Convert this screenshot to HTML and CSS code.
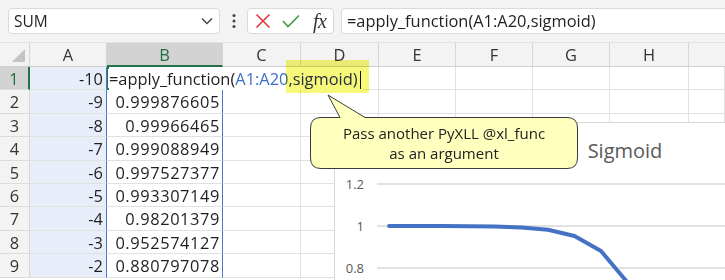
FILE: index.html
```html
<!DOCTYPE html>
<html lang="en">
<head>
    <meta charset="UTF-8">
    <title>Sigmoid - apply_function</title>
    <link rel="stylesheet" href="styles.css">
</head>
<body>

<div class="toolbar">
    <div class="name-box">
        <span>SUM</span>
        <svg class="chevron" width="12" height="8" viewBox="0 0 12 8"><polyline points="1,1.5 6,6.5 11,1.5" fill="none" stroke="#444" stroke-width="1.4"/></svg>
    </div>
    <svg class="dots" width="4" height="16" viewBox="0 0 4 16">
        <circle cx="2" cy="2.5" r="1.5" fill="#444"/>
        <circle cx="2" cy="8" r="1.5" fill="#444"/>
        <circle cx="2" cy="13.5" r="1.5" fill="#444"/>
    </svg>
    <div class="fx-buttons">
        <svg width="16" height="16" viewBox="0 0 16 16"><path d="M1.5 1.5 L14.5 14.5 M14.5 1.5 L1.5 14.5" stroke="#e0383e" stroke-width="1.6" fill="none"/></svg>
        <svg width="18" height="14" viewBox="0 0 18 14"><polyline points="1,7 6,12.5 17,1.5" stroke="#3d9c4a" stroke-width="1.7" fill="none"/></svg>
        <span class="fx">fx</span>
    </div>
    <div class="formula-input">=apply_function(A1:A20,sigmoid)</div>
</div>

<div class="sheet">
    <div class="hcell corner"><span class="corner-mark"></span></div>
    <div class="hcell">A</div>
    <div class="hcell active">B</div>
    <div class="hcell">C</div>
    <div class="hcell">D</div>
    <div class="hcell">E</div>
    <div class="hcell">F</div>
    <div class="hcell">G</div>
    <div class="hcell">H</div>
    <div class="hcell last"></div>

    <div class="rnum active">1</div>
    <div class="cell ref">-10</div>
    <div class="cell editing">
        <span class="entry">=apply_function(<span class="arg-ref">A1:A20</span><span class="arg-fn">,sigmoid)</span><span class="caret"></span></span>
    </div>
    <div class="cell"></div><div class="cell"></div><div class="cell"></div><div class="cell"></div><div class="cell"></div><div class="cell"></div><div class="cell"></div>

    <div class="rnum">2</div>
    <div class="cell ref">-9</div><div class="cell out">0.999876605</div>
    <div class="cell"></div><div class="cell"></div><div class="cell"></div><div class="cell"></div><div class="cell"></div><div class="cell"></div><div class="cell"></div>

    <div class="rnum">3</div>
    <div class="cell ref">-8</div><div class="cell out">0.99966465</div>
    <div class="cell"></div><div class="cell"></div><div class="cell"></div><div class="cell"></div><div class="cell"></div><div class="cell"></div><div class="cell"></div>

    <div class="rnum">4</div>
    <div class="cell ref">-7</div><div class="cell out">0.999088949</div>
    <div class="cell"></div><div class="cell"></div><div class="cell"></div><div class="cell"></div><div class="cell"></div><div class="cell"></div><div class="cell"></div>

    <div class="rnum">5</div>
    <div class="cell ref">-6</div><div class="cell out">0.997527377</div>
    <div class="cell"></div><div class="cell"></div><div class="cell"></div><div class="cell"></div><div class="cell"></div><div class="cell"></div><div class="cell"></div>

    <div class="rnum">6</div>
    <div class="cell ref">-5</div><div class="cell out">0.993307149</div>
    <div class="cell"></div><div class="cell"></div><div class="cell"></div><div class="cell"></div><div class="cell"></div><div class="cell"></div><div class="cell"></div>

    <div class="rnum">7</div>
    <div class="cell ref">-4</div><div class="cell out">0.98201379</div>
    <div class="cell"></div><div class="cell"></div><div class="cell"></div><div class="cell"></div><div class="cell"></div><div class="cell"></div><div class="cell"></div>

    <div class="rnum">8</div>
    <div class="cell ref">-3</div><div class="cell out">0.952574127</div>
    <div class="cell"></div><div class="cell"></div><div class="cell"></div><div class="cell"></div><div class="cell"></div><div class="cell"></div><div class="cell"></div>

    <div class="rnum">9</div>
    <div class="cell ref">-2</div><div class="cell out">0.880797078</div>
    <div class="cell"></div><div class="cell"></div><div class="cell"></div><div class="cell"></div><div class="cell"></div><div class="cell"></div><div class="cell"></div>
</div>

<!-- marker over the function argument -->
<div class="highlight"></div>

<!-- chart object floating over the grid -->
<div class="chart">
    <div class="chart-title">Sigmoid</div>
    <svg class="chart-plot" width="400" height="170" viewBox="0 0 400 170">
        <line x1="42" y1="61" x2="400" y2="61" stroke="#d9d9d9" stroke-width="1.3"/>
        <line x1="42" y1="103" x2="400" y2="103" stroke="#d9d9d9" stroke-width="1.3"/>
        <line x1="42" y1="145" x2="400" y2="145" stroke="#d9d9d9" stroke-width="1.3"/>
        <text x="29" y="66" text-anchor="end">1.2</text>
        <text x="29" y="108" text-anchor="end">1</text>
        <text x="29" y="150" text-anchor="end">0.8</text>
        <polyline fill="none" stroke="#4472c4" stroke-width="4" stroke-linecap="round" stroke-linejoin="round"
            points="54,103 80.5,103 107,103.1 133.5,103.2 160,103.5 186.5,104.4 213,106.8 239.5,113 266,128 292.5,159.5 319,208"/>
    </svg>
</div>

<div class="callout">
    <svg class="callout-shape" width="274" height="80" viewBox="0 0 274 80">
        <path d="M13 25.5 L32 25.5 L20 3 L57 25.5 L259 25.5 Q269.5 25.5 269.5 36 L269.5 66 Q269.5 76.5 259 76.5 L13 76.5 Q2.5 76.5 2.5 66 L2.5 36 Q2.5 25.5 13 25.5 Z"
            fill="#ffffbe" stroke="#3a3a3a" stroke-width="1"/>
    </svg>
    <div class="callout-text">
        <div>Pass another PyXLL @xl_func</div>
        <div>as an argument</div>
    </div>
</div>

</body>
</html>
```

FILE: styles.css
```css
body {
    margin: 0;
    width: 725px;
    height: 280px;
    overflow: hidden;
    background-color: #fff;
    font-family: "Open Sans", "Liberation Sans", sans-serif;
    color: #1f1f1f;
    position: relative;
}

.toolbar {
    display: flex;
    align-items: center;
    height: 43px;
    padding: 0 0 0 8px;
    background-color: #f3f3f3;
    border-bottom: 1px solid #e3e3e3;
    box-sizing: border-box;
}

.name-box {
    display: flex;
    align-items: center;
    justify-content: space-between;
    width: 212px;
    height: 26px;
    padding: 0 6px 0 5px;
    box-sizing: border-box;
    background-color: #fff;
    border: 1px solid #dadada;
    border-radius: 4px;
    font-size: 15.5px;
}

.dots {
    margin: 0 11px 0 12px;
}

.fx-buttons {
    display: flex;
    align-items: center;
    gap: 11px;
    width: 87px;
    height: 26px;
    padding-left: 7px;
    box-sizing: border-box;
    background-color: #fff;
    border: 1px solid #dadada;
    border-radius: 4px;
}

.fx {
    font-family: "Liberation Serif", serif;
    font-style: italic;
    font-size: 20px;
    color: #333;
    letter-spacing: -0.5px;
    margin-left: 2px;
}

.formula-input {
    flex: 1;
    height: 26px;
    margin-left: 7px;
    margin-right: -10px;
    padding-left: 5px;
    box-sizing: border-box;
    background-color: #fff;
    border: 1px solid #dadada;
    border-radius: 4px;
    font-size: 16.4px;
    line-height: 24px;
    white-space: nowrap;
}

.sheet {
    display: grid;
    grid-template-columns: 30px 77px 116px 78px 78px 77px 77px 77px 79px 1fr;
    grid-template-rows: 24px repeat(9, 23.4px);
    font-size: 16.4px;
}

.hcell {
    background-color: #f3f3f3;
    border-right: 1px solid #d6d6d6;
    border-bottom: 1px solid #cfcfcf;
    text-align: center;
    line-height: 23px;
    color: #333;
    box-sizing: border-box;
}

.hcell.active {
    background-color: #d3d3d3;
    color: #1e6e3c;
    border-bottom: 2px solid #217346;
}

.hcell.last {
    border-right: none;
}

.corner {
    position: relative;
}

.corner-mark {
    position: absolute;
    right: 4px;
    bottom: 4px;
    width: 0;
    height: 0;
    border-left: 13px solid transparent;
    border-bottom: 13px solid #c4c4c4;
}

.rnum {
    background-color: #f3f3f3;
    border-right: 1px solid #d6d6d6;
    border-bottom: 1px solid #dcdcdc;
    text-align: center;
    line-height: 23px;
    color: #333;
    box-sizing: border-box;
}

.rnum.active {
    background-color: #d3d3d3;
    color: #1e6e3c;
    border-right: 2px solid #217346;
}

.cell {
    border-right: 1px solid #e1e1e1;
    border-bottom: 1px solid #e1e1e1;
    line-height: 23px;
    padding: 0 3px;
    box-sizing: border-box;
    white-space: nowrap;
}

.cell.ref {
    background-color: #e8eef9;
    text-align: right;
    border-right: 1px solid #4a78c8;
}

.cell.out {
    text-align: right;
    letter-spacing: 0.6px;
    padding-right: 2px;
    border-right: 1px solid #4a78c8;
}

.cell.editing {
    position: relative;
    z-index: 1;
    border: 2px solid #217346;
    border-left-width: 1px;
    padding-left: 1px;
    line-height: 20px;
    overflow: visible;
}

.entry {
    background-color: #fff;
    padding-right: 2px;
}

.arg-ref {
    color: #3a6fc6;
}

.arg-fn {
    color: #27307c;
}

.caret {
    display: inline-block;
    width: 1px;
    height: 18px;
    margin-left: 2px;
    background-color: #111;
    vertical-align: -4px;
}

.highlight {
    position: absolute;
    left: 286px;
    top: 60px;
    width: 83px;
    height: 33px;
    background-color: #f7f77a;
    mix-blend-mode: multiply;
    z-index: 2;
}

.chart {
    position: absolute;
    left: 334px;
    top: 122px;
    width: 400px;
    height: 170px;
    background-color: #fff;
    border: 1px solid #d9d9d9;
    z-index: 3;
}

.chart-title {
    position: absolute;
    left: 240px;
    top: 14px;
    width: 100px;
    text-align: center;
    font-size: 20px;
    color: #595959;
}

.chart-plot {
    position: absolute;
    left: 0;
    top: 0;
}

.chart-plot text {
    font-family: "Open Sans", "Liberation Sans", sans-serif;
    font-size: 13px;
    fill: #595959;
}

.callout {
    position: absolute;
    left: 308px;
    top: 92px;
    width: 274px;
    height: 80px;
    z-index: 4;
}

.callout-shape {
    position: absolute;
    left: 0;
    top: 0;
}

.callout-text {
    position: relative;
    padding-top: 31px;
    width: 272px;
    text-align: center;
    font-size: 15px;
    line-height: 20px;
    color: #222;
}
```
